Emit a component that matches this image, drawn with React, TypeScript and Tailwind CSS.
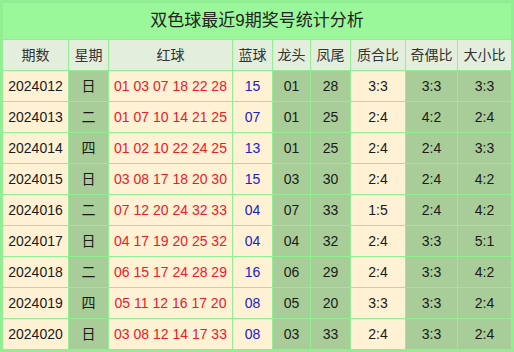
const rows = [
  ["2024012", "日", "01 03 07 18 22 28", "15", "01", "28", "3:3", "3:3", "3:3"],
  ["2024013", "二", "01 07 10 14 21 25", "07", "01", "25", "2:4", "4:2", "2:4"],
  ["2024014", "四", "01 02 10 22 24 25", "13", "01", "25", "2:4", "2:4", "3:3"],
  ["2024015", "日", "03 08 17 18 20 30", "15", "03", "30", "2:4", "2:4", "4:2"],
  ["2024016", "二", "07 12 20 24 32 33", "04", "07", "33", "1:5", "2:4", "4:2"],
  ["2024017", "日", "04 17 19 20 25 32", "04", "04", "32", "2:4", "3:3", "5:1"],
  ["2024018", "二", "06 15 17 24 28 29", "16", "06", "29", "2:4", "3:3", "4:2"],
  ["2024019", "四", "05 11 12 16 17 20", "08", "05", "20", "3:3", "3:3", "2:4"],
  ["2024020", "日", "03 08 12 14 17 33", "08", "03", "33", "2:4", "3:3", "2:4"],
]

const headers = ["期数", "星期", "红球", "蓝球", "龙头", "凤尾", "质合比", "奇偶比", "大小比"]

// which columns get the green fill
const greenCols = [1, 4, 5, 7, 8]

function cellClass(i: number) {
  const bg = greenCols.includes(i) ? "bg-[#a9cd98]" : "bg-[#fff1d4]"
  const color = i === 2 ? "text-[#e8202a]" : i === 3 ? "text-[#2020c8]" : "text-[#1a1a1a]"
  return `${bg} ${color} flex items-center justify-center`
}

export default function App() {
  return (
    <main
      className="w-[514px] h-[352px] bg-[#92ee92] p-[3px]"
      style={{ fontFamily: '"Liberation Sans", "Noto Sans CJK SC", sans-serif' }}
    >
      <div className="flex flex-col gap-px">
        <div className="h-[36px] bg-[#9af89a] flex items-center justify-center text-[17px] text-[#222]">
          双色球最近9期奖号统计分析
        </div>
        <div className="grid grid-cols-[65px_39px_123px_39px_37px_39px_54px_51px_53px] auto-rows-[30px] gap-px text-[14px]">
          {headers.map((h) => (
            <div key={h} className="bg-[#e4eedd] text-[#333] flex items-center justify-center">
              {h}
            </div>
          ))}
          {rows.map((r) =>
            r.map((v, i) => (
              <div key={r[0] + "-" + i} className={cellClass(i)}>
                {v}
              </div>
            ))
          )}
        </div>
      </div>
    </main>
  )
}
